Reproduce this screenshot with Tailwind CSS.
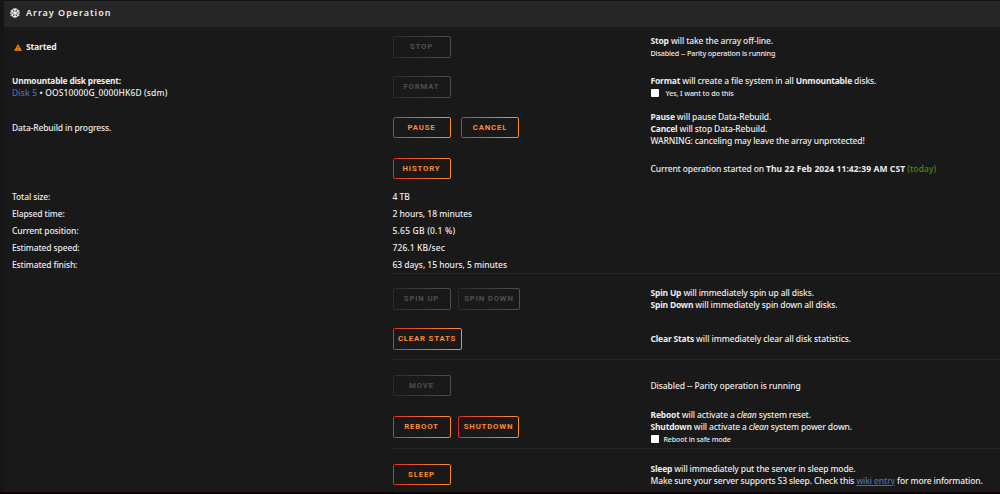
<!DOCTYPE html>
<html lang="en">
<head>
    <meta charset="UTF-8">
    <meta name="viewport" content="width=device-width, initial-scale=1.0">
    <title>Array Operation</title>
    <script src="https://cdn.jsdelivr.net/npm/@tailwindcss/browser@4"></script>
</head>

<body class="h-[494px] overflow-hidden bg-[#151515] pl-1 pt-px font-['Noto_Sans',sans-serif] text-[8.5px] leading-3 font-medium tracking-[-0.14px] text-[#ececec] [&_b]:tracking-[-0.19px]">

    <main class="h-[491px] bg-[#191919]">

        <header class="flex h-[26px] items-center gap-1.5 bg-[#262626] pl-1.5 pb-0.5">
            <svg class="size-[10px]" viewBox="0 0 20 20" fill="none" stroke="#f2f2f2" stroke-width="2.2">
                <path d="M10 0v20M1.3 5l17.4 10M1.3 15L18.7 5M6.5 1.5L10 5l3.5-3.5M6.5 18.5L10 15l3.5 3.5M.8 9l4.9-1.5L4.4 2.6M19.2 11l-4.9 1.5 1.3 4.9M.8 11l4.9 1.5-1.3 4.9M19.2 9l-4.9-1.5 1.3-4.9"/>
            </svg>
            <h1 class="text-[9px] font-semibold tracking-[0.98px]">Array Operation</h1>
        </header>

        <!-- array state -->
        <section>
            <div class="grid h-10 grid-cols-[380.5px_258px_1fr] items-center pl-2">
                <div class="flex items-center gap-1 pl-0.5">
                    <svg class="h-[7px] w-2" viewBox="0 0 16 14"><path fill="#ff8c00" stroke="#ff8c00" stroke-linejoin="round" d="M8 1l7 12H1z"/><path stroke="#191919" stroke-width="1.6" d="M8 5v4M8 10.5v1.8"/></svg>
                    <b class="text-[8.6px]">Started</b>
                </div>
                <div class="flex"><button disabled class="h-[21.5px] w-[58px] rounded-[2.5px] bg-linear-to-r from-[#2b2b2b] to-[#4f4f4f] p-px"><span class="flex h-full items-center justify-center rounded-[1px] bg-[#191919] font-['Roboto',sans-serif] text-[7.8px] font-bold tracking-[0.8px] text-[#4f4f4f]">STOP</span></button></div>
                <div><p><b>Stop</b> will take the array off-line.</p><p class="text-[7.2px]">Disabled -- Parity operation is running</p></div>
            </div>
            <div class="grid h-10 grid-cols-[380.5px_258px_1fr] items-center pl-2">
                <div><p><b class="text-[8.4px]">Unmountable disk present:</b></p><p class="tracking-[0.12px]"><a class="text-[#486dba]">Disk 5</a> • OOS10000G_0000HK6D (sdm)</p></div>
                <div class="flex"><button disabled class="h-[21.5px] w-[58px] rounded-[2.5px] bg-linear-to-r from-[#2b2b2b] to-[#4f4f4f] p-px"><span class="flex h-full items-center justify-center rounded-[1px] bg-[#191919] font-['Roboto',sans-serif] text-[7.8px] font-bold tracking-[0.8px] text-[#4f4f4f]">FORMAT</span></button></div>
                <div><p><b>Format</b> will create a file system in all <b>Unmountable</b> disks.</p><p class="flex items-center gap-[7px] text-[7.2px]"><i class="size-2 rounded-[1px] bg-white"></i>Yes, I want to do this</p></div>
            </div>
            <div class="grid h-[41px] grid-cols-[380.5px_258px_1fr] items-center pl-2">
                <div>Data-Rebuild in progress.</div>
                <div class="flex gap-[10.5px]">
                    <button class="h-[21.5px] w-[58px] rounded-[2.5px] bg-linear-to-r from-[#e22828] to-[#ff8c2f] p-px"><span class="flex h-full items-center justify-center rounded-[1px] bg-[#191919] font-['Roboto',sans-serif] text-[7.8px] font-bold tracking-[0.8px] text-[#ff8c2f]">PAUSE</span></button>
                    <button class="h-[21.5px] w-[58px] rounded-[2.5px] bg-linear-to-r from-[#e22828] to-[#ff8c2f] p-px"><span class="flex h-full items-center justify-center rounded-[1px] bg-[#191919] font-['Roboto',sans-serif] text-[7.8px] font-bold tracking-[0.8px] text-[#ff8c2f]">CANCEL</span></button>
                </div>
                <div class="pt-0.5"><p><b>Pause</b> will pause Data-Rebuild.</p><p><b>Cancel</b> will stop Data-Rebuild.</p><p>WARNING: canceling may leave the array unprotected!</p></div>
            </div>
            <div class="grid h-[41px] grid-cols-[380.5px_258px_1fr] items-center pl-2">
                <div></div>
                <div class="flex"><button class="h-[21.5px] w-[58px] rounded-[2.5px] bg-linear-to-r from-[#e22828] to-[#ff8c2f] p-px"><span class="flex h-full items-center justify-center rounded-[1px] bg-[#191919] font-['Roboto',sans-serif] text-[7.8px] font-bold tracking-[0.8px] text-[#ff8c2f]">HISTORY</span></button></div>
                <div>Current operation started on <b class="tracking-[0.09px]!">Thu 22 Feb 2024 11:42:39 AM CST</b> <span class="tracking-[0.1px] text-[#4f8a10]">(today)</span></div>
            </div>
        </section>

        <!-- rebuild progress -->
        <dl class="grid h-[84px] grid-cols-[380.5px_1fr] grid-rows-5 items-center pl-2 [&>dd]:tracking-[-0.04px]">
            <dt>Total size:</dt><dd>4 TB</dd>
            <dt>Elapsed time:</dt><dd>2 hours, 18 minutes</dd>
            <dt>Current position:</dt><dd class="tracking-[0.2px]!">5.65 GB (0.1 %)</dd>
            <dt>Estimated speed:</dt><dd class="tracking-[0.1px]!">726.1 KB/sec</dd>
            <dt>Estimated finish:</dt><dd>63 days, 15 hours, 5 minutes</dd>
        </dl>

        <section class="ml-[387px] border-t border-[#262626] pl-[1.5px]">
            <div class="grid h-[45px] grid-cols-[258px_1fr] items-center pt-[5px]">
                <div class="flex gap-[7.5px]">
                    <button disabled class="h-[21.5px] w-[58px] rounded-[2.5px] bg-linear-to-r from-[#2b2b2b] to-[#4f4f4f] p-px"><span class="flex h-full items-center justify-center rounded-[1px] bg-[#191919] font-['Roboto',sans-serif] text-[7.8px] font-bold tracking-[0.8px] text-[#4f4f4f]">SPIN UP</span></button>
                    <button disabled class="h-[21.5px] w-[62px] rounded-[2.5px] bg-linear-to-r from-[#2b2b2b] to-[#4f4f4f] p-px"><span class="flex h-full items-center justify-center rounded-[1px] bg-[#191919] font-['Roboto',sans-serif] text-[7.8px] font-bold tracking-[0.8px] text-[#4f4f4f]">SPIN DOWN</span></button>
                </div>
                <div><p><b>Spin Up</b> will immediately spin up all disks.</p><p><b>Spin Down</b> will immediately spin down all disks.</p></div>
            </div>
            <div class="grid h-10 grid-cols-[258px_1fr] items-center">
                <div class="flex"><button class="h-[21.5px] w-[69px] rounded-[2.5px] bg-linear-to-r from-[#e22828] to-[#ff8c2f] p-px"><span class="flex h-full items-center justify-center rounded-[1px] bg-[#191919] font-['Roboto',sans-serif] text-[7.8px] font-bold tracking-[0.8px] text-[#ff8c2f]">CLEAR STATS</span></button></div>
                <div class="tracking-[-0.1px]"><b>Clear Stats</b> will immediately clear all disk statistics.</div>
            </div>
        </section>

        <section class="ml-[387px] border-t border-[#262626] pl-[1.5px]">
            <div class="grid h-[46px] grid-cols-[258px_1fr] items-center pt-[5px]">
                <div class="flex"><button disabled class="h-[21.5px] w-[58px] rounded-[2.5px] bg-linear-to-r from-[#2b2b2b] to-[#4f4f4f] p-px"><span class="flex h-full items-center justify-center rounded-[1px] bg-[#191919] font-['Roboto',sans-serif] text-[7.8px] font-bold tracking-[0.8px] text-[#4f4f4f]">MOVE</span></button></div>
                <div class="tracking-[-0.1px]">Disabled -- Parity operation is running</div>
            </div>
            <div class="grid h-[42px] grid-cols-[258px_1fr] items-center">
                <div class="flex gap-[7.5px]">
                    <button class="h-[21.5px] w-[58px] rounded-[2.5px] bg-linear-to-r from-[#e22828] to-[#ff8c2f] p-px"><span class="flex h-full items-center justify-center rounded-[1px] bg-[#191919] font-['Roboto',sans-serif] text-[7.8px] font-bold tracking-[0.8px] text-[#ff8c2f]">REBOOT</span></button>
                    <button class="h-[21.5px] w-[61px] rounded-[2.5px] bg-linear-to-r from-[#e22828] to-[#ff8c2f] p-px"><span class="flex h-full items-center justify-center rounded-[1px] bg-[#191919] font-['Roboto',sans-serif] text-[7.8px] font-bold tracking-[0.8px] text-[#ff8c2f]">SHUTDOWN</span></button>
                </div>
                <div><p><b>Reboot</b> will activate a <em>clean</em> system reset.</p><p><b>Shutdown</b> will activate a <em>clean</em> system power down.</p><p class="flex items-center gap-[5px] text-[7.1px]"><i class="size-2 rounded-[1px] bg-white"></i>Reboot in safe mode</p></div>
            </div>
        </section>

        <section class="ml-[387px] border-t border-[#262626] pl-[1.5px]">
            <div class="grid h-[41px] grid-cols-[258px_1fr] items-center pt-[10px]">
                <div class="flex"><button class="h-[21.5px] w-[58px] rounded-[2.5px] bg-linear-to-r from-[#e22828] to-[#ff8c2f] p-px"><span class="flex h-full items-center justify-center rounded-[1px] bg-[#191919] font-['Roboto',sans-serif] text-[7.8px] font-bold tracking-[0.8px] text-[#ff8c2f]">SLEEP</span></button></div>
                <div><p><b>Sleep</b> will immediately put the server in sleep mode.</p><p class="whitespace-nowrap">Make sure your server supports S3 sleep. Check this <a class="text-[#486dba] underline">wiki entry</a> for more information.</p></div>
            </div>
        </section>
    </main>
    <div class="-ml-1 h-0.5 bg-[#0d0409]"></div>

</body>
</html>
